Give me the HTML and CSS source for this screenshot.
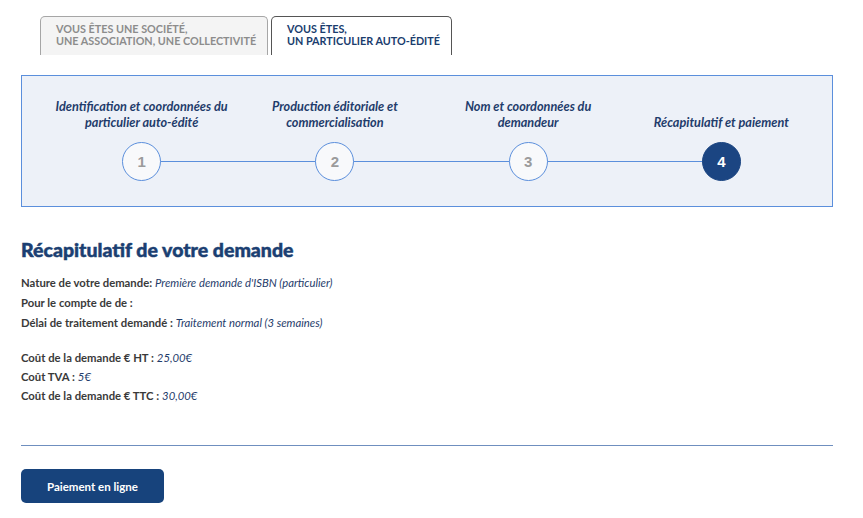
FILE: index.html
```html
<!DOCTYPE html>
<html lang="fr">
<head>
  <meta charset="UTF-8" />
  <title>Demande d'ISBN</title>
  <link rel="stylesheet" href="styles.css">
</head>
<body>
  <div class="page">
    <div class="tabs">
      <div class="tab">VOUS ÊTES UNE SOCIÉTÉ,<br>UNE ASSOCIATION, UNE COLLECTIVITÉ</div>
      <div class="tab active">VOUS ÊTES,<br>UN PARTICULIER AUTO-ÉDITÉ</div>
    </div>

    <div class="stepper">
      <div class="step">
        <div class="step-label">Identification et coordonnées du particulier auto-édité</div>
        <div class="step-dot">1</div>
      </div>
      <div class="step">
        <div class="step-label">Production éditoriale et commercialisation</div>
        <div class="step-dot">2</div>
      </div>
      <div class="step">
        <div class="step-label">Nom et coordonnées du demandeur</div>
        <div class="step-dot">3</div>
      </div>
      <div class="step last">
        <div class="step-label">Récapitulatif et paiement</div>
        <div class="step-dot current">4</div>
      </div>
    </div>

    <h1 class="title">Récapitulatif de votre demande</h1>

    <div class="summary">
      <p><b>Nature de votre demande:</b> <i>Première demande d'ISBN (particulier)</i></p>
      <p><b>Pour le compte de de :</b></p>
      <p><b>Délai de traitement demandé :</b> <i>Traitement normal (3 semaines)</i></p>
    </div>

    <div class="summary costs">
      <p><b>Coût de la demande € HT :</b> <i>25,00€</i></p>
      <p><b>Coût TVA :</b> <i>5€</i></p>
      <p><b>Coût de la demande € TTC :</b> <i>30,00€</i></p>
    </div>

    <hr class="sep">

    <button class="pay">Paiement en ligne</button>
  </div>
</body>
</html>
```

FILE: styles.css
```css
* {
  margin: 0;
  padding: 0;
  box-sizing: border-box;
}

body {
  font-family: Lato, "Open Sans", sans-serif;
  background: #fff;
  color: #333;
}

.page {
  width: 812px;
  margin-left: 21px;
  padding-top: 16px;
}

.tabs {
  display: flex;
  gap: 3px;
  padding-left: 19px;
}

.tab {
  width: 228px;
  height: 39px;
  padding: 6px 0 0 15px;
  border: 1px solid #a6a6a6;
  border-bottom: none;
  border-radius: 5px 5px 0 0;
  background: #f4f4f4;
  color: #8c8c8c;
  font-size: 10.8px;
  font-weight: 700;
  line-height: 12px;
}

.tab.active {
  width: 181px;
  background: #fff;
  border-color: #555;
  color: #1a3d6e;
}

.stepper {
  margin-top: 20px;
  height: 132px;
  display: flex;
  padding: 0 14px 0 23px;
  background: #edf1f8;
  border: 1px solid #5b8fdc;
}

.step {
  flex: 1;
  position: relative;
  display: flex;
  flex-direction: column;
  align-items: center;
  justify-content: flex-end;
  padding-bottom: 25px;
}

.step::after {
  content: "";
  position: absolute;
  left: 50%;
  width: 100%;
  bottom: 44px;
  border-top: 1px solid #5b8fdc;
}

.step.last::after {
  display: none;
}

.step-label {
  width: 180px;
  text-align: center;
  font-size: 12.7px;
  font-style: italic;
  font-weight: 700;
  line-height: 16px;
  color: #1f3c6b;
  margin-bottom: 12px;
}

.step-dot {
  position: relative;
  z-index: 1;
  width: 39px;
  height: 39px;
  border-radius: 50%;
  border: 1px solid #5b8fdc;
  background: #f8f9fb;
  color: #9b9b9b;
  font-family: "Liberation Sans", Arial, sans-serif;
  font-size: 15px;
  font-weight: 700;
  display: flex;
  align-items: center;
  justify-content: center;
}

.step-dot.current {
  background: #1b4582;
  border-color: #1b4582;
  color: #fff;
}

.title {
  margin-top: 31px;
  font-size: 19.5px;
  font-weight: 900;
  color: #1b3f72;
  -webkit-text-stroke: 0.5px #1b3f72;
}

.summary {
  margin-top: 12px;
  font-size: 11.3px;
  line-height: 20px;
}

.summary b {
  color: #3a3a3a;
}

.summary i {
  color: #1f3c6b;
}

.summary.costs {
  margin-top: 15px;
  line-height: 19px;
}

.sep {
  margin-top: 40px;
  border: none;
  border-top: 1px solid #6f8fbf;
}

.pay {
  margin-top: 23px;
  width: 143px;
  height: 34px;
  border: none;
  border-radius: 5px;
  background: #17437c;
  color: #fff;
  font-family: Lato, sans-serif;
  font-size: 11.5px;
  font-weight: 700;
  cursor: pointer;
}
```
